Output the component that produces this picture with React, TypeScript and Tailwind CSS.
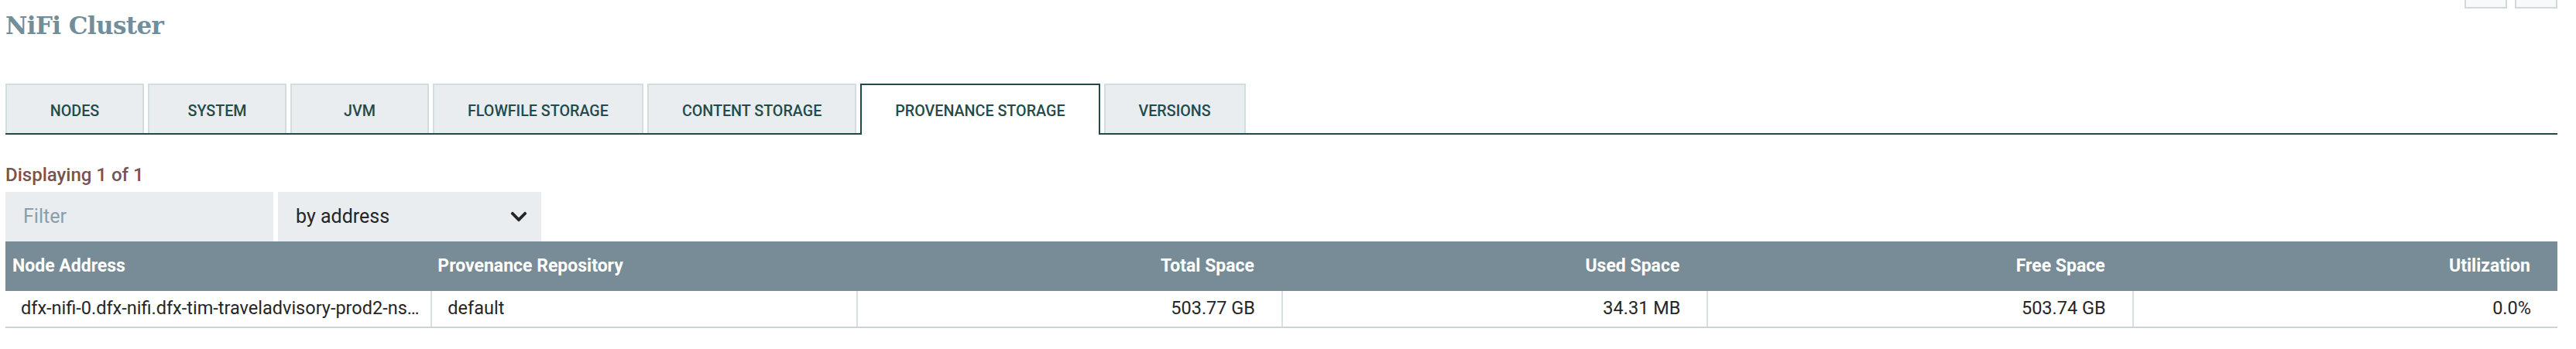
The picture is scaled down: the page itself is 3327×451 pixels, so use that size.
import React from "react";
import { FaChevronDown } from "react-icons/fa";

const tabs = [
  "NODES",
  "SYSTEM",
  "JVM",
  "FLOWFILE STORAGE",
  "CONTENT STORAGE",
  "PROVENANCE STORAGE",
  "VERSIONS",
];

const headers: { label: string; right: boolean }[] = [
  { label: "Node Address", right: false },
  { label: "Provenance Repository", right: false },
  { label: "Total Space", right: true },
  { label: "Used Space", right: true },
  { label: "Free Space", right: true },
  { label: "Utilization", right: true },
];

const row: { value: string; right: boolean }[] = [
  { value: "dfx-nifi-0.dfx-nifi.dfx-tim-traveladvisory-prod2-ns.svc.cluster.local:8443", right: false },
  { value: "default", right: false },
  { value: "503.77 GB", right: true },
  { value: "34.31 MB", right: true },
  { value: "503.74 GB", right: true },
  { value: "0.0%", right: true },
];

export default function App() {
  return (
    <div className="w-[3327px] h-[451px] bg-white pl-[7px] pr-[24px] font-['Roboto',sans-serif] overflow-hidden">
      <div className="flex justify-between items-start h-[108px]">
        <h1 className="mt-[15px] text-[31px] leading-[36px] font-bold tracking-[-0.6px] text-[#728e9b] font-['DejaVu_Serif',serif]">
          NiFi Cluster
        </h1>
        <div className="flex gap-[10px]">
          <div className="w-[55px] h-[11px] border-2 border-t-0 border-[#cfd9dc] bg-[#f7f9fa]" />
          <div className="w-[55px] h-[11px] border-2 border-t-0 border-[#cfd9dc] bg-[#f7f9fa]" />
        </div>
      </div>

      <div className="flex gap-[5px] border-b-2 border-[#1f4a4a]">
        {tabs.map((t) =>
          t === "PROVENANCE STORAGE" ? (
            <div
              key={t}
              className="h-[66px] -mb-[2px] min-w-[179px] px-[43px] pt-[5px] pb-[2px] flex items-center justify-center bg-white border-2 border-b-0 border-[#1f4a4a] text-[19.7px] font-medium text-[#234b4c] whitespace-nowrap"
            >
              {t}
            </div>
          ) : (
            <div
              key={t}
              className="h-[64px] min-w-[179px] px-[43px] pt-[5px] flex items-center justify-center bg-[#e9edf0] border-2 border-b-0 border-[#d3dcdf] text-[19.7px] font-medium text-[#234b4c] whitespace-nowrap"
            >
              {t}
            </div>
          )
        )}
      </div>

      <div className="mt-[38px] text-[24px] leading-[28px] font-medium text-[#775351]">
        Displaying 1 of 1
      </div>

      <div className="mt-[8px] flex gap-[6px] h-[64px]">
        <div className="w-[346px] bg-[#e9edf0] flex items-center pl-[23px] text-[25px] text-[#8a9daa]">
          Filter
        </div>
        <div className="w-[340px] bg-[#e9edf0] flex items-center justify-between pl-[23px] pr-[17px] text-[25px] text-[#262626]">
          <span>by address</span>
          <FaChevronDown className="w-[24px] h-[24px] text-[#262626]" />
        </div>
      </div>

      <div className="w-full">
        <div className="grid grid-cols-6 h-[64px] bg-[#788c98] text-white text-[23px] font-bold">
          {headers.map((h) => (
            <div
              key={h.label}
              className={
                h.right
                  ? "flex items-center justify-end pr-[35px] whitespace-nowrap"
                  : "flex items-center pl-[9px] whitespace-nowrap"
              }
            >
              {h.label}
            </div>
          ))}
        </div>
        <div className="grid grid-cols-6 h-[48px] border-b-2 border-[#c9d3d8] text-[23.5px] text-[#262626]">
          {row.map((c, i) => (
            <div
              key={i}
              className={
                (i > 0 ? "border-l-2 border-[#d9e0e3] " : "") +
                (c.right
                  ? "flex items-center justify-end pr-[34px] min-w-0"
                  : "flex items-center pl-[20px] pr-[9px] min-w-0")
              }
            >
              <span className="truncate">{c.value}</span>
            </div>
          ))}
        </div>
      </div>
    </div>
  );
}
